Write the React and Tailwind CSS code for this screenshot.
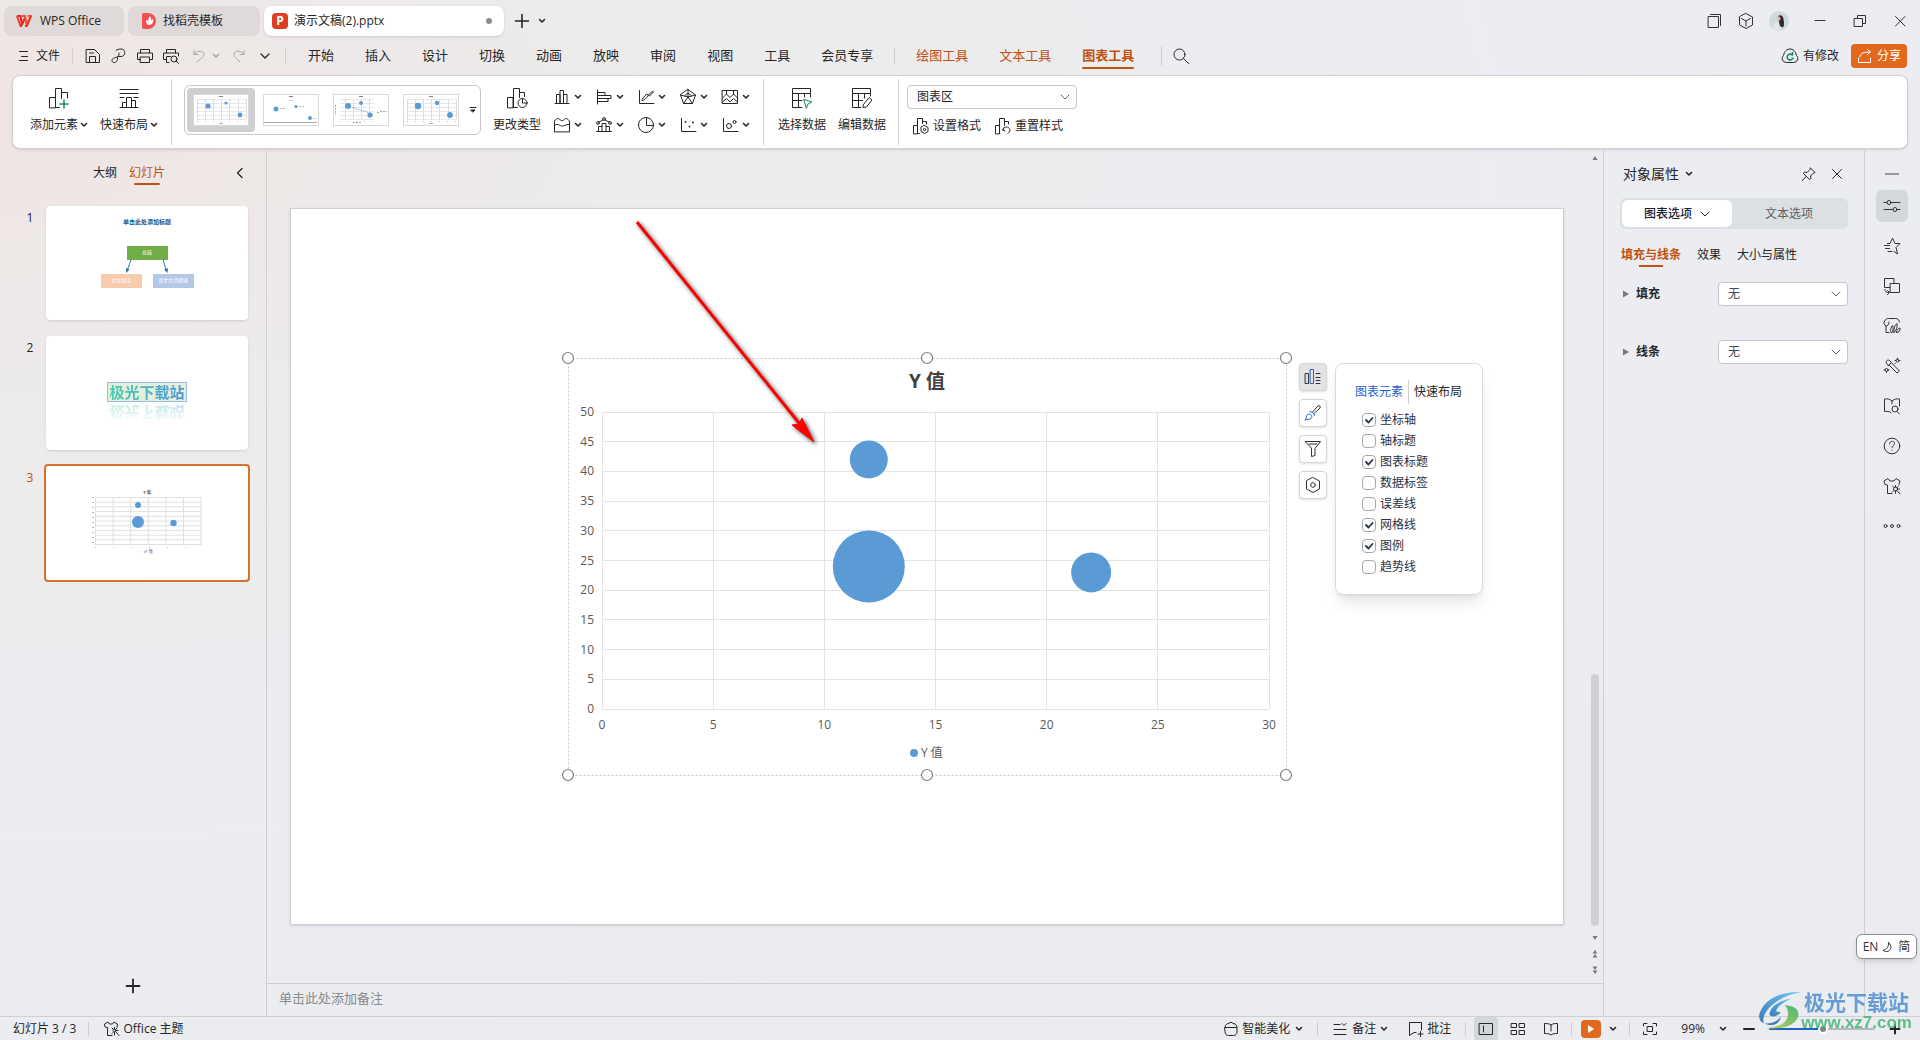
/**
 * FILE: App.jsx
 * PURPOSE: Presentation editor window with the chart tools ribbon open
 */

import React, { useState } from "react";

const MENU_TABS = ["开始", "插入", "设计", "切换", "动画", "放映", "审阅", "视图", "工具", "会员专享"];
const TOOL_TABS = ["绘图工具", "文本工具", "图表工具"];

const CHART_ELEMENTS = [
  { label: "坐标轴", checked: true },
  { label: "轴标题", checked: false },
  { label: "图表标题", checked: true },
  { label: "数据标签", checked: false },
  { label: "误差线", checked: false },
  { label: "网格线", checked: true },
  { label: "图例", checked: true },
  { label: "趋势线", checked: false },
];

const BUBBLES = [
  { x: 12, y: 42, r: 19 },
  { x: 12, y: 24, r: 36 },
  { x: 22, y: 23, r: 20 },
];

/* ---------- icons ---------- */

function Icon({ size = 18, width = 1, className = "", children }) {
  return (
    <svg
      width={size}
      height={size}
      viewBox={`0 0 ${size} ${size}`}
      fill="none"
      stroke="currentColor"
      strokeWidth={width}
      strokeLinejoin="round"
      strokeLinecap="round"
      className={`shrink-0 ${className}`}
      aria-hidden="true"
    >
      {children}
    </svg>
  );
}

function Caret({ className = "" }) {
  return (
    <Icon size={8} width={1.6} className={className}>
      <path d="M1.5 2.5 4 5l2.5-2.5" />
    </Icon>
  );
}

function ThinCaret({ className = "" }) {
  return (
    <Icon size={10} width={1} className={className}>
      <path d="M1 3l4 4 4-4" />
    </Icon>
  );
}

function Divider({ className = "" }) {
  return <span className={`w-px shrink-0 bg-[#cfcfd1] ${className}`} />;
}

const ShirtIcon = ({ size = 18 }) => (
  <Icon size={size}>
    <path d="M9 15.5H4.5V7.500L2 7 1.500 4 5 2l1.500 2h3L11 2l3.500 2-.5 3" />
    <circle cx="11.500" cy="10.500" r="1.500" />
    <path d="M11.500 7.500V9M15 10.500h-2M9 8l1.500 1.500M14 8l-1.500 1.500M10 12.500l-1 1M13 12l3 3.500M11.500 12v3" />
  </Icon>
);

const FILE_ICONS = [
  {
    label: "保存",
    art: <path d="M2.500 2.500h8l5 5v8h-13zM5.500 15.500V9.500h6v6M5.500 6h4" />,
  },
  {
    label: "输出为PDF",
    art: <path d="M6 3.500C7 2.500 9 2 11 2c5 0 5 7.500 0 7.500H8.500c-.8 0-1 .5-1 1.500C8 16 2 17 2 13.500 2 11 5 11 8 9.500c1-.8 1-2 1-3.500" />,
  },
  {
    label: "打印",
    art: (
      <>
        <path d="M4.500 6V2.500h9V6M4.500 12.500h-3V6h15v6.500h-3" />
        <path d="M4.500 10h9v5.500h-9z" />
      </>
    ),
  },
  {
    label: "打印预览",
    art: (
      <>
        <path d="M4.500 6V2.500h9V6M4.500 12.500h-3V6h15v3M7 15.500H4.500V9.500h4" />
        <circle cx="12" cy="12" r="3" />
        <path d="m14 14 2.500 2.500" />
      </>
    ),
  },
];

const CHART_TYPE_ICONS = [
  { label: "柱形图", art: <path d="M2 15.500h14M3.500 15.500V6.500H7v9M7 15.500v-13h3.500v13M10.500 6.500H14v9" /> },
  { label: "条形图", art: <path d="M2.500 2v14M2.500 4.500H10v3H2.500M2.500 7.500H16v3H2.500M2.500 10.500H13v3H2.500" /> },
  {
    label: "折线图",
    art: <path d="M2.500 2.500v13H17M5 11.500l4.500-5.500 3 2L16.500 4M5 12.500c5 .5 6.500-9 11-9" />,
  },
  {
    label: "雷达图",
    art: <path d="M9 1.500l7.500 5.500-3 8.500h-9L1.500 7zM9 1.500V9l7.500-2M9 9 1.500 7M9 9l4.500 6.500M9 9l-4.500 6.500M5.500 8 9 5l3.500 3" />,
  },
  {
    label: "股价图",
    art: <path d="M1.500 2.500h15v13h-15zM1.500 10 5.500 6 9 9.500 12.500 6l4 4M5.500 2.500V6M12.500 2.500V6M1.500 14l4-3.500L9 14l3.500-3.500 4 3.500" />,
  },
  {
    label: "面积图",
    art: <path d="M1.500 15.500V5c2-3 4-3 6-1s4-1 5-1.500 4 1.500 4 3.500v9.500zM1.500 9.500c4-3 5 1 8 .5s4-2 7-1.500" />,
  },
  {
    label: "组合图",
    art: (
      <>
        <path d="M1.500 15.500h15M3.500 15.500v-5h3.500M7 15.500V7.500h4v8M11 10.500h3.500v5M4 6l4-2M10 4l4 2" />
        <circle cx="3" cy="7" r="1.400" />
        <circle cx="9" cy="3" r="1.400" />
        <circle cx="15" cy="7" r="1.400" />
      </>
    ),
  },
  {
    label: "饼图",
    art: (
      <>
        <circle cx="9" cy="9" r="7.500" />
        <path d="M9.500 1.500v8h7" />
      </>
    ),
  },
  {
    label: "散点图",
    art: (
      <>
        <path d="M2.500 2.500v13H17" />
        <path strokeWidth="1.8" d="M6.500 6v.1M10.500 10.500v.1M14 6.500v.1" />
      </>
    ),
  },
  {
    label: "气泡图",
    art: (
      <>
        <path d="M2.500 2.500v13H17" />
        <circle cx="8" cy="10" r="2.500" />
        <circle cx="13.500" cy="6" r="1.500" />
      </>
    ),
  },
];

const RAIL_ICONS = [
  {
    label: "属性",
    active: true,
    art: (
      <>
        <path d="M1 5.500h3M8 5.500h9M1 12.500h9M14 12.500h3" />
        <circle cx="6" cy="5.500" r="2" />
        <circle cx="12" cy="12.500" r="2" />
      </>
    ),
  },
  {
    label: "动画",
    art: <path d="M4.500 6.500h2.500l2.500-5.500 2.500 5.500h5l-4 4 1.500 6.500-3.500-2.500M1.500 8.500h5M2.500 11.500h4M5 14.500h4" />,
  },
  {
    label: "切换",
    art: <path d="M7 10.500H1.500v-9H11V6M7.500 6.500h9v9h-9zM2 12.500c0 2 1 3 4 3M4.500 13.500l2 2-2 2" />,
  },
  {
    label: "素材",
    art: <path d="M6 15.500H3V9C1 8 .5 6 1.500 4c1-2 3-2.500 4-2.500h7c2 0 3.500 1 4 3.500M3 9c2 0 3-1.500 3-4M8 15.500c-1-3 0-5 1.500-7 1 3 1 5-.5 7zM11 15.500c-.5-4 .5-7 3-9 .5 4-.5 7-3 9zM13.500 15.500c.5-3 1.500-4 3.500-4.500.5 3-1 4.500-3.500 4.500" />,
  },
  {
    label: "设计工具",
    art: (
      <>
        <path d="m6 8 8 8 2.500-2L8.500 6M3.500 6.500c-1.500-2 1-4.500 3-3l2 2-3 3z" />
        <circle cx="14.500" cy="3.500" r="1.500" />
        <circle cx="3.500" cy="13" r="1.500" />
        <path d="M14.500 1v1M17 3.500h-1M12 3.500h1M1 13h1M3.500 15.500v-1M6 13H5M12.500 6l-1 1" />
      </>
    ),
  },
  {
    label: "查找",
    art: (
      <>
        <path d="M8 15.500c-2-1.500-4-1-6.500-1V2c3-.5 5 0 7.500 2 2.500-2 5-2.500 7.500-2v7M9 4v3" />
        <circle cx="12" cy="12" r="3" />
        <path d="m14 14.500 2.500 2.500" />
      </>
    ),
  },
  {
    label: "帮助",
    art: (
      <>
        <circle cx="9" cy="9" r="7.800" />
        <path d="M6.500 7c0-3.500 5-3.500 5-.5 0 2-2.500 2-2.500 4M9 13v.2" />
      </>
    ),
  },
  {
    label: "模板",
    art: (
      <>
        <path d="M9 16.500H4.500V8L2 7.500 1 4l4-2.500 2 2.500h4l2-2.500L17 4l-1 3.500" />
        <circle cx="12.500" cy="12" r="2" />
        <path d="M12.500 8.500V10M16.500 12h-2M9.500 9l1.500 1.500M15.500 9 14 10.500M9.500 15l1.500-1.500M14 13.500l3 3.500M12.500 14v2.500" />
      </>
    ),
  },
  {
    label: "更多",
    art: (
      <>
        <circle cx="2.500" cy="9" r="1.500" />
        <circle cx="9" cy="9" r="1.500" />
        <circle cx="15.500" cy="9" r="1.500" />
      </>
    ),
  },
];

/* ---------- top area ---------- */

function TitleBar() {
  return (
    <header className="flex h-[42px] items-center pl-1 pr-3 text-xs text-[#262626]">
      <div className="flex items-center gap-1">
        <button className="flex h-[30px] w-[120px] items-center gap-2 rounded-lg bg-[#dfdad9] pl-3">
          <svg width="16" height="12" viewBox="0 0 16 12" fill="none" strokeWidth="2" aria-hidden="true">
            <path d="M1 1h3.500L6 9.500 9.500 2" stroke="#e4251b" />
            <path d="M6 1h3l1.500 8.500L15 1h-3.500" stroke="#f4502f" />
            <path d="M1 1l3.500 10H6M15 1l-4 10H9" stroke="#f03a28" />
          </svg>
          <span>WPS Office</span>
        </button>
        <button className="flex h-[30px] w-[132px] items-center gap-[7px] rounded-lg bg-[#dfdad9] pl-3.5">
          <svg width="14" height="16" viewBox="0 0 14 16" aria-hidden="true">
            <path d="M0 2a2 2 0 0 1 2-2h4a8 8 0 0 1 0 16H2a2 2 0 0 1-2-2z" fill="#f0504f" />
            <path d="M4 7c2 0 3 2 3 5-2 0-3-2-3-5zM8 3c2 3 1 6-1 8-1-3-1-5 1-8zM11 6c1 3-1 6-4 6 0-3 2-5 4-6z" fill="#fff" />
          </svg>
          <span>找稻壳模板</span>
        </button>
        <button className="flex h-[30px] w-[240px] items-center gap-[6px] rounded-lg bg-white pl-2 pr-3 shadow-sm">
          <span className="flex h-4 w-4 items-center justify-center rounded-sm bg-[#e03c22] text-xs font-bold text-white">P</span>
          <span className="flex-1 text-left">演示文稿(2).pptx</span>
          <span className="h-1.5 w-1.5 rounded-full bg-[#8d8d8d]" />
        </button>
      </div>
      <button className="ml-2.5" aria-label="新建">
        <Icon size={16} width={1.6}>
          <path d="M8 1.500v13M1.500 8h13" />
        </Icon>
      </button>
      <button className="ml-2" aria-label="标签列表">
        <Caret />
      </button>

      <div className="ml-auto flex items-center text-[#333]">
        <button aria-label="窗口">
          <Icon size={16}>
            <path d="M1.500 3.500h10v11h-10zM3.500 1.500h10v11" />
          </Icon>
        </button>
        <button className="ml-3.5" aria-label="应用">
          <Icon size={18}>
            <path d="M9 1.500l6.500 3.500v8L9 16.500 2.500 13V5zM4.500 6.500 9 9l4.500-2.500M9 9v5" />
          </Icon>
        </button>
        <button className="ml-3.5" aria-label="账户">
          <svg width="20" height="20" viewBox="0 0 20 20" aria-hidden="true">
            <circle cx="10" cy="10" r="10" fill="#cfd9de" />
            <path d="M9 5c3-2 5 0 5.500 3 .5 4 1 6-.5 8.500l-3-1.500-1-4z" fill="#2e2730" />
            <path d="M8.500 6c1-1 3-.5 3 1.500s-2 3-3 2.500z" fill="#dfb9a8" />
            <path d="M4 18c0-4 2-7 5.500-7L11 19.500H6z" fill="#dfe9ea" />
          </svg>
        </button>
        <button className="ml-6" aria-label="最小化">
          <Icon size={14}>
            <path d="M2 6.500h10" />
          </Icon>
        </button>
        <button className="ml-[25px]" aria-label="还原">
          <Icon size={16}>
            <path d="M2.500 5.500h8v8h-8zM5.500 5.500v-3h8v8h-3" />
          </Icon>
        </button>
        <button className="ml-6" aria-label="关闭">
          <Icon size={16}>
            <path d="m3.500 3.500 9.500 9.500M13 3.500 3.500 13" />
          </Icon>
        </button>
      </div>
    </header>
  );
}

function MenuBar({ active, onSelect }) {
  return (
    <nav className="flex h-[27px] items-center pl-[18px] pr-[13px] text-[#262626]">
      <button className="flex items-center gap-1.5 text-xs">
        <Icon size={12} width={1}>
          <path d="M1.500 1.500h8M3.500 6.500h6M1.500 10.500h8" />
        </Icon>
        文件
      </button>
      <Divider className="ml-3 h-4" />
      <div className="ml-[11px] flex gap-2">
        {FILE_ICONS.map((item) => (
          <button key={item.label} aria-label={item.label}>
            <Icon>{item.art}</Icon>
          </button>
        ))}
      </div>
      <button className="ml-3 flex items-center gap-1 text-[#aaa6a6]" aria-label="撤销">
        <Icon size={16}>
          <path d="M2 2.500v4h4M2 6.500c3-5 10-4 10 0 0 3-4 4-7 7.500" />
        </Icon>
        <Caret />
      </button>
      <button className="ml-[11px] text-[#aaa6a6]" aria-label="重做">
        <Icon size={16}>
          <path d="M13 2.500v4H9M13 6.500c-3-5-10-4-10 0 0 3 3 4 6 7.500" />
        </Icon>
      </button>
      <button className="ml-3" aria-label="更多命令">
        <Icon size={12} width={1.3}>
          <path d="m2 4 4 4 4-4" />
        </Icon>
      </button>
      <Divider className="ml-3.5 h-4" />

      <div className="ml-[22px] flex gap-[31px] text-[13px]">
        {MENU_TABS.map((tab) => (
          <button key={tab} onClick={() => onSelect(tab)}>
            {tab}
          </button>
        ))}
      </div>
      <Divider className="ml-[21px] h-4" />
      <div className="ml-[21px] flex gap-[31px] text-[13px] text-[#c2500f]">
        {TOOL_TABS.map((tab) => (
          <button
            key={tab}
            onClick={() => onSelect(tab)}
            className={`relative ${active === tab ? "font-bold after:absolute after:inset-x-0 after:-bottom-1 after:h-0.5 after:rounded after:bg-[#c2500f]" : ""}`}
          >
            {tab}
          </button>
        ))}
      </div>
      <Divider className="ml-[27px] h-5" />
      <button className="ml-2.5" aria-label="搜索">
        <Icon>
          <circle cx="7.500" cy="7.500" r="5.500" />
          <path d="m11.500 11.500 5 5" />
        </Icon>
      </button>

      <button className="ml-auto flex items-center gap-1 text-xs">
        <Icon size={18}>
          <path d="M5 15.500a4 4 0 0 1-2.500-7C3.500 4 6 2 9 2s5.500 2 6.500 6.500a4 4 0 0 1-2.500 7z" />
          <path stroke="#138a62" strokeWidth="1.500" d="M11.500 8A3 3 0 1 0 12 11M9 7.500h2.500V5.500" />
        </Icon>
        有修改
      </button>
      <button className="ml-3 flex h-6 w-14 items-center justify-center gap-1 rounded bg-[#e2691c] text-xs text-white">
        <Icon size={16}>
          <path d="M1.500 10v4.500h12V10M3 9c0-4 4-5 10-5M10.500 1.500 13.500 4l-3 2.500" />
        </Icon>
        分享
      </button>
    </nav>
  );
}

function RibbonButton({ label, caret, wide, children }) {
  return (
    <button className={`flex shrink-0 flex-col items-center gap-2 pt-[11px] ${wide ? "w-[70px]" : "w-[60px]"}`}>
      <Icon size={22}>{children}</Icon>
      <span className="flex items-center gap-0.5 leading-4">
        {label}
        {caret && <Caret />}
      </span>
    </button>
  );
}

function StyleThumb({ variant, selected }) {
  const grid = variant !== 1;
  const left = variant === 2 ? 7 : 4;
  const right = variant === 2 ? 41 : 53;
  const dots = {
    0: [[15, 12, 2.6], [33, 9, 1.6], [47, 21, 2.4]],
    1: [[13, 15, 2.5], [33, 12.5, 1.6], [47, 24, 2]],
    2: [[15, 12, 3], [28, 9, 2], [37, 21, 2.6]],
    3: [[15, 12, 3.2], [34, 9, 2.2], [47, 21, 2.9]],
  }[variant];

  return (
    <button
      aria-label={`图表样式 ${variant + 1}`}
      className={`flex h-11 w-[68px] items-center justify-center rounded ${selected ? "bg-[#cfcfcf]" : ""}`}
    >
      <svg width="56" height="32" viewBox="0 0 56 32" aria-hidden="true">
        <rect x="0.5" y="0.5" width="55" height="31" fill="#fff" stroke="#d9d9d9" />
        <path d="M26 2.500h4" stroke="#8a8078" />
        {grid &&
          [5, 9, 13, 17, 21, 25].map((y) => <path key={y} d={`M${left} ${y}.5H${right}`} stroke="#e8e8e8" />)}
        {grid &&
          [4, 12, 20, 28, 36, 45, 53]
            .filter((x) => x >= left && x <= right)
            .map((x) => <path key={x} d={`M${x}.5 5v20`} stroke="#dcdcdc" />)}
        {grid && <path d={`M${left} 27.500H${right}`} stroke="#c9b3b3" strokeDasharray="1 7" />}
        {variant === 1 && (
          <>
            <path d="M1 28.500h53" stroke="#aaa" />
            <path d="M26 6.500h4M17 14.500h6M36 12.500h6M50 24.500h4" stroke="#b5bdd6" strokeDasharray="2 1" />
          </>
        )}
        {variant === 2 && (
          <>
            <path d="m15 12 22 7" stroke="#5b9bd5" strokeDasharray="1 1" />
            <path d="M44 18.500h2M47 17.500h7" stroke="#a5a3b4" strokeDasharray="2 1" />
            <path d="M20 28.500h9M2.500 11v10" stroke="#b8a89c" strokeDasharray="2 1" />
          </>
        )}
        {(variant === 0 || variant === 3) && <path d="M26 29.500h4" stroke="#a9b3c6" />}
        {dots.map(([x, y, r]) => (
          <circle key={x} cx={x} cy={y} r={r} fill="#5b9bd5" />
        ))}
      </svg>
    </button>
  );
}

function Ribbon() {
  return (
    <section className="mx-3 mt-1.5 flex h-[74px] items-start rounded-lg border border-[#d3d1d1] bg-white pl-[11px] text-xs text-[#262626] shadow-sm">
      <RibbonButton label="添加元素" caret wide>
        <path d="M1.500 20.500V10.500h6v10zM7.500 10.500v-9h6v10M13.500 5.500h6V11M7.500 20.500h4" />
        <path stroke="#138a62" strokeWidth="1.500" d="M16 13v8M12 17h8" />
      </RibbonButton>
      <RibbonButton label="快速布局" caret wide>
        <path d="M2 2.500h18M2 6.500h18M2 10.500h4M16 10.500h4M2 20.500h18M4.500 20.500v-5h4M8.500 20.500v-10h5v10M13.500 13.500h4v7" />
      </RibbonButton>
      <Divider className="ml-[7px] mt-[3px] h-[66px]" />

      <div className="ml-3 mt-[9px] flex h-[50px] w-[297px] items-center gap-0.5 rounded-md border border-[#c6c6c6] pl-0.5">
        {[0, 1, 2, 3].map((v) => (
          <StyleThumb key={v} variant={v} selected={v === 0} />
        ))}
        <button className="ml-0.5" aria-label="更多样式">
          <Icon size={8} width={1}>
            <path d="M1 1.500h6" />
            <path d="M2 4h4L4 6z" fill="currentColor" />
          </Icon>
        </button>
      </div>

      <div className="ml-1.5">
        <RibbonButton label="更改类型">
          <path d="M1.500 20.500V10.500h5.500v10zM7.500 20.500v-19h6v9M13.500 5.500h5v4M7.500 20.500h4" />
          <circle cx="16.500" cy="16" r="4.500" />
          <path d="M16.500 11.500V16H21" />
        </RibbonButton>
      </div>

      <div className="ml-1.5 mt-[7px] grid grid-cols-[repeat(5,42px)] grid-rows-[28px_28px]">
        {CHART_TYPE_ICONS.map((item) => (
          <button key={item.label} aria-label={item.label} className="flex items-center gap-[3px]">
            <Icon>{item.art}</Icon>
            <Caret />
          </button>
        ))}
      </div>
      <Divider className="mt-[3px] h-[66px]" />

      <div className="ml-2 flex">
        <RibbonButton label="选择数据">
          <path d="M11 20.500H1.500v-19h18V10M1.500 6.500h18M1.500 13.500H11M7.500 6.500v14M13.500 6.500V10" />
          <path stroke="#138a62" d="m13 12.500 8 2.500-4 2-1.500 4z" />
        </RibbonButton>
        <RibbonButton label="编辑数据">
          <path d="M10 20.500H1.500v-19h18V9M1.500 6.500h18M1.500 13.500h10M7.500 6.500v14M13.500 6.500V11" />
          <path d="m12.500 17.500 5.500-7 3 2.500-5.500 7-3 .5z" />
        </RibbonButton>
      </div>
      <Divider className="ml-1.5 mt-[3px] h-[66px]" />

      <div className="ml-2 mt-[9px] flex flex-col gap-2">
        <Dropdown label="图表区域" options={["图表区", "绘图区"]} className="w-[170px]" />
        <div className="flex gap-[13px] pl-[5px] leading-4">
          <button className="flex items-center gap-[3px]">
            <Icon>
              <path d="M1.500 16.500v-8h4v8zM5.500 8.500v-7h5v5M10.500 4.500h4V7M5.500 16.500h2" />
              <path d="M12.500 8.500l3.500 2v4l-3.500 2-3.500-2v-4z" />
              <circle cx="12.500" cy="12.500" r="1.200" />
            </Icon>
            设置格式
          </button>
          <button className="flex items-center gap-[3px]">
            <Icon>
              <path d="M1.500 16.500v-8h4v8zM5.500 16.500v-15h5v7M10.500 4.500h4V7" />
              <path d="M10 10.500 8.500 13l2.500 1M9 13c1-5 7-3 7 0 0 1.500-1 2.500-2 3.500" />
            </Icon>
            重置样式
          </button>
        </div>
      </div>
    </section>
  );
}

function Dropdown({ label, options, className = "", selectClass = "" }) {
  return (
    <div className={`relative flex h-6 items-center ${className}`}>
      <select
        aria-label={label}
        className={`h-6 w-full appearance-none rounded border border-[#c4c6c8] bg-white pl-[9px] pr-6 text-xs outline-none ${selectClass}`}
      >
        {options.map((option) => (
          <option key={option}>{option}</option>
        ))}
      </select>
      <ThinCaret className="pointer-events-none absolute right-[7px] text-[#666]" />
    </div>
  );
}

/* ---------- slide list ---------- */

function TreeSlide() {
  return (
    <div className="flex h-full flex-col items-center pt-2.5 text-[5px] leading-3 text-white">
      <p className="text-[6px] font-bold text-[#20598c]">单击此处添加标题</p>
      <p className="mt-[18px] h-3.5 w-[41px] bg-[#70ad47] text-center">总结</p>
      <svg width="42" height="14" viewBox="0 0 42 14" stroke="#2e75a8" fill="#2e75a8" aria-hidden="true">
        <path d="M5 0 1 11M37 0l3.500 11" fill="none" />
        <path stroke="none" d="m0 13 0-5 3.500 1.500zM41.500 13l.5-5-4 1.500z" />
      </svg>
      <div className="flex gap-[11px] text-center">
        <p className="h-3.5 w-[41px] bg-[#f8cbad]">语文阅读</p>
        <p className="h-3.5 w-[41px] bg-[#b4c7e7]">语文古诗朗诵</p>
      </div>
    </div>
  );
}

function WordArtSlide() {
  return (
    <div className="flex h-full flex-col items-center pt-[46px] text-[15px] font-bold leading-[18px]">
      <p className="h-5 w-20 border border-[#9dbde6] bg-[#e2efda] text-center">
        <span className="bg-gradient-to-r from-[#48d0ae] to-[#4f8fd6] bg-clip-text text-transparent">极光下载站</span>
      </p>
      <p
        aria-hidden="true"
        className="h-5 w-20 -scale-y-100 bg-[#f3faf0] text-center opacity-40 [mask-image:linear-gradient(to_top,black,transparent)]"
      >
        <span className="bg-gradient-to-r from-[#48d0ae] to-[#4f8fd6] bg-clip-text text-transparent">极光下载站</span>
      </p>
    </div>
  );
}

function ChartSlide() {
  return (
    <svg className="h-full w-full" viewBox="0 0 202 114" aria-hidden="true">
      <g stroke="#e0e0e0">
        {[0, 1, 2, 3, 4, 5, 6, 7, 8, 9, 10].map((i) => (
          <path key={i} d={`M49 ${31.5 + i * 4.7}H155`} />
        ))}
        {[0, 1, 2, 3, 4, 5, 6].map((i) => (
          <path key={i} d={`M${49.5 + i * 17.6} 31V79`} />
        ))}
      </g>
      <g fill="#5b9bd5">
        <circle cx="92" cy="39" r="3" />
        <circle cx="92" cy="56" r="6" />
        <circle cx="127.500" cy="57" r="3.200" />
        <circle cx="98.500" cy="86" r="0.8" />
      </g>
      <g fill="#555" fontSize="4" textAnchor="middle">
        <text x="101" y="28" fontWeight="700">Y 值</text>
        <text x="103" y="87">Y 值</text>
      </g>
      <path d="M47 31v49" stroke="#bbb" strokeWidth="2" strokeDasharray="1 4" />
      <path d="M49 81.500h107" stroke="#bbb" strokeDasharray="1 17" />
    </svg>
  );
}

function SlidePanel({ current, onSelect }) {
  const slides = [<TreeSlide />, <WordArtSlide />, <ChartSlide />];

  return (
    <aside className="flex w-[267px] shrink-0 flex-col border-r border-[#cfcfd1] text-xs text-[#262626]">
      <div className="flex h-[46px] items-center pl-[93px] pr-5">
        <button>大纲</button>
        <button className="relative ml-3 text-[#c2500f] after:absolute after:inset-x-[5px] after:-bottom-1 after:h-0.5 after:rounded after:bg-[#c2500f]">
          幻灯片
        </button>
        <button className="ml-auto" aria-label="收起">
          <Icon size={12} width={1.3}>
            <path d="M8 1.500 3.500 6 8 10.500" />
          </Icon>
        </button>
      </div>
      <ol className="flex flex-1 flex-col gap-3 pl-6 pr-4 pt-2">
        {slides.map((slide, i) => (
          <li key={i} className="flex gap-2">
            <span className={`w-3 pt-1.5 text-center ${current === i ? "text-[#c2500f]" : ""}`}>{i + 1}</span>
            <button
              onClick={() => onSelect(i)}
              aria-label={`幻灯片 ${i + 1}`}
              className={`h-[118px] flex-1 rounded border-2 ${current === i ? "border-[#d9702f]" : "border-transparent"}`}
            >
              <div className={`h-full rounded-sm bg-white ${current === i ? "" : "shadow"}`}>{slide}</div>
            </button>
          </li>
        ))}
      </ol>
      <button className="mb-[22px] flex justify-center" aria-label="新建幻灯片">
        <Icon size={16} width={1.8}>
          <path d="M8 1.500v13M1.500 8h13" />
        </Icon>
      </button>
    </aside>
  );
}

/* ---------- canvas ---------- */

// The plot spans x 0-30 and y 0-50 inside a 667x297 px box
function BubbleChart() {
  const px = (x) => 43 + (x / 30) * 667;
  const py = (y) => 360 - (y / 50) * 297;
  const handles = [9, 368, 727];

  return (
    <svg width="736" height="436" viewBox="0 0 736 436" role="img" aria-label="Y 值">
      <rect x="9.500" y="9.500" width="718" height="417" fill="none" stroke="#c8c8c8" strokeDasharray="2 2" />
      <g stroke="#e3e3e3" shapeRendering="crispEdges">
        {[0, 5, 10, 15, 20, 25, 30, 35, 40, 45, 50].map((y) => (
          <path key={y} d={`M43 ${py(y)}H710`} />
        ))}
        {[0, 5, 10, 15, 20, 25, 30].map((x) => (
          <path key={x} d={`M${px(x)} 63V360`} />
        ))}
      </g>
      <g fill="#595959" fontSize="12">
        {[0, 5, 10, 15, 20, 25, 30, 35, 40, 45, 50].map((y) => (
          <text key={y} x="35" y={py(y) + 4} textAnchor="end">
            {y}
          </text>
        ))}
        {[0, 5, 10, 15, 20, 25, 30].map((x) => (
          <text key={x} x={px(x)} y="380" textAnchor="middle">
            {x}
          </text>
        ))}
        <text x="362" y="408">Y 值</text>
      </g>
      <text x="368" y="39" textAnchor="middle" fontSize="19" fontWeight="700" fill="#404040">
        Y 值
      </text>
      <g fill="#5b9bd5">
        {BUBBLES.map((b) => (
          <circle key={`${b.x}-${b.y}`} cx={px(b.x)} cy={py(b.y)} r={b.r} />
        ))}
        <circle cx="355" cy="404" r="4" />
      </g>
      <g fill="#fff" stroke="#7f7f7f" strokeWidth="1.200">
        {handles.map((x) => (
          <circle key={`t${x}`} cx={x} cy="9" r="5.500" />
        ))}
        {handles.map((x) => (
          <circle key={`b${x}`} cx={x} cy="426" r="5.500" />
        ))}
      </g>
    </svg>
  );
}

function RedArrow() {
  return (
    <svg
      width="200"
      height="240"
      viewBox="0 0 200 240"
      aria-hidden="true"
      className="pointer-events-none absolute -top-[135px] left-[69px] drop-shadow-[2px_2px_2px_rgba(0,0,0,0.7)]"
    >
      <path d="m9 8 166 206" stroke="#f00" strokeWidth="3" />
      <path d="m186 228-22-17 7-1 3-6z" fill="#f00" stroke="#f00" />
    </svg>
  );
}

const SIDE_TOOLS = [
  {
    label: "图表元素",
    art: (
      <>
        <path d="M1.500 5.500h3v10h-3zM12 5.500h4M12 9.500h4M12 12.500h4M12 15.500h4" />
        <path stroke="#2563d9" d="M6.500 1.500h3v14h-3z" />
      </>
    ),
  },
  {
    label: "图表样式",
    art: (
      <>
        <path d="m8.500 8 5.500-6c1.500-1 3 .5 2 2l-6 5.500" />
        <path stroke="#2563d9" d="M6 7.500c2 0 4.500 2 4.500 4M1.500 16c1-2 .5-4 2-5.500C6 8.500 9.500 12 7 14.500c-1.500 1-3.500.5-5.500 1.500z" />
      </>
    ),
  },
  { label: "图表筛选器", art: <path d="M1.500 1.500h15l-5.500 7v7l-3.500 1v-8zM5 4h8" /> },
  {
    label: "设置图表区域格式",
    art: (
      <>
        <path d="m9 1.500 6.500 3.500v8L9 16.500 2.500 13V5z" />
        <circle cx="9" cy="9" r="2.300" />
      </>
    ),
  },
];

function ElementPanel() {
  const [items, setItems] = useState(CHART_ELEMENTS);

  const toggle = (label) => {
    setItems(items.map((item) => (item.label === label ? { ...item, checked: !item.checked } : item)));
  };

  return (
    <div className="h-[232px] w-[148px] shrink-0 rounded-lg border border-[#d9d9dc] bg-white pt-4 text-xs text-[#2a3145] shadow-lg">
      <div className="flex h-6 items-center pl-[19px]">
        <button className="text-[#1f5fd0]">图表元素</button>
        <Divider className="mx-[5px] h-6" />
        <button className="text-[#262626]">快速布局</button>
      </div>
      <ul className="pl-[26px] pt-1.5">
        {items.map((item) => (
          <li key={item.label}>
            <label className="flex h-[21px] items-center gap-1">
              <span className="relative flex">
                <input
                  type="checkbox"
                  checked={item.checked}
                  onChange={() => toggle(item.label)}
                  className="h-3.5 w-3.5 appearance-none rounded-sm border border-[#a3a7af] bg-white"
                />
                {item.checked && (
                  <Icon size={14} width={1.8} className="pointer-events-none absolute inset-0">
                    <path d="m4 7 2.500 2.500L10.500 5" />
                  </Icon>
                )}
              </span>
              {item.label}
            </label>
          </li>
        ))}
      </ul>
    </div>
  );
}

function Canvas() {
  return (
    <main className="flex min-w-0 flex-1 flex-col">
      <div className="flex min-h-0 flex-1">
        <div className="flex min-w-0 flex-1 pb-[58px] pl-[23px] pr-[25px] pt-[58px]">
          <div className="flex flex-1 items-center justify-center border border-[#d0d0d2] bg-white shadow-sm">
            <div className="relative">
              <BubbleChart />
              <RedArrow />
              <div className="absolute left-full top-3.5 flex gap-2 pl-1">
                <div className="flex flex-col gap-2 text-[#333]">
                  {SIDE_TOOLS.map((tool, i) => (
                    <button
                      key={tool.label}
                      aria-label={tool.label}
                      className={`flex h-7 w-7 items-center justify-center rounded border border-[#d6d6d6] shadow ${
                        i === 0 ? "bg-[#e3e3e3]" : "bg-white"
                      }`}
                    >
                      <Icon>{tool.art}</Icon>
                    </button>
                  ))}
                </div>
                <ElementPanel />
              </div>
            </div>
          </div>
        </div>
        <div className="flex w-3 flex-col items-center pb-[9px] pt-1 text-[#76777a]">
          <ScrollMark d="M4 2 6.500 6h-5z" />
          <span className="mt-auto h-[252px] w-2 rounded-full bg-[#cfd0d4]" />
          <span className="mt-2 flex flex-col gap-2">
            <ScrollMark d="M4 6 1.500 2h5z" />
            <ScrollMark d="M4 0 6.500 3.500h-5zM4 4l2.500 3.500h-5z" />
            <ScrollMark d="M4 4 1.500.5h5zM4 8 1.500 4.500h5z" />
          </span>
        </div>
        <div className="w-0.5" />
      </div>
      <textarea
        aria-label="备注"
        placeholder="单击此处添加备注"
        className="h-[33px] w-full resize-none border-t border-[#cfcfd1] bg-transparent pl-3 pt-1 text-[13px] leading-5 outline-none placeholder:text-[#8a8a8a]"
      />
    </main>
  );
}

function ScrollMark({ d }) {
  return (
    <svg width="8" height="8" viewBox="0 0 8 8" fill="currentColor" aria-hidden="true">
      <path d={d} />
    </svg>
  );
}

/* ---------- properties ---------- */

function PropertyRow({ label }) {
  return (
    <div className="flex h-6 items-center">
      <button className="flex items-center gap-1.5 pl-0.5 font-bold">
        <svg width="8" height="8" viewBox="0 0 8 8" fill="#77797c" aria-hidden="true">
          <path d="M1 .5 7 4 1 7.500z" />
        </svg>
        {label}
      </button>
      <Dropdown label={label} options={["无", "自动"]} className="ml-auto w-[130px]" selectClass="text-[#3f4a60]" />
    </div>
  );
}

function PropertiesPanel() {
  return (
    <aside className="w-[262px] shrink-0 border-x border-[#cfd0d3] px-4 text-xs text-[#262626]">
      <div className="flex h-12 items-center">
        <button className="flex items-center gap-1.5 pl-[3px] text-sm">
          对象属性
          <Caret />
        </button>
        <button className="ml-auto" aria-label="固定">
          <Icon size={14}>
            <path d="m8.500 1 4.500 4.500-1.500.5-3 3 .5 2.500-1.500 1-6-6 1-1.500L5 5.500l3-3zM4 9.500.500 13.500" />
          </Icon>
        </button>
        <button className="ml-3.5 mr-1" aria-label="关闭">
          <Icon size={14}>
            <path d="m2.500 2.500 9 9M11.500 2.500l-9 9" />
          </Icon>
        </button>
      </div>
      <div className="flex h-[31px] rounded-md bg-[#dde0e3] p-0.5">
        <button className="flex w-[110px] items-center justify-center gap-2 rounded-md bg-white font-medium text-[#1d2233]">
          图表选项
          <ThinCaret />
        </button>
        <button className="flex-1 text-[#5c5f63]">文本选项</button>
      </div>
      <div className="mt-4 flex h-5 items-center gap-4 pl-px">
        <button className="relative font-bold text-[#c2500f] after:absolute after:-bottom-1 after:left-[18px] after:h-0.5 after:w-6 after:bg-[#c2500f]">
          填充与线条
        </button>
        <button>效果</button>
        <button>大小与属性</button>
      </div>
      <div className="mt-[17px] flex flex-col gap-[34px]">
        <PropertyRow label="填充" />
        <PropertyRow label="线条" />
      </div>
    </aside>
  );
}

function IconRail() {
  return (
    <nav className="flex w-[55px] shrink-0 flex-col items-center gap-2 pr-0.5 pt-4 text-[#333]">
      <button className="flex h-4 items-center" aria-label="收起">
        <span className="h-0.5 w-3.5 bg-[#98989a]" />
      </button>
      {RAIL_ICONS.map((item) => (
        <button
          key={item.label}
          aria-label={item.label}
          className={`flex h-8 w-8 items-center justify-center rounded-md ${item.active ? "bg-[#d5d8db]" : ""}`}
        >
          <Icon>{item.art}</Icon>
        </button>
      ))}
    </nav>
  );
}

/* ---------- status bar ---------- */

function StatusBar() {
  const [zoom, setZoom] = useState(51);

  return (
    <footer className="flex h-6 shrink-0 items-center border-t border-[#cfcfd1] pl-[13px] pr-[17px] text-xs text-[#262626]">
      <span>幻灯片 3 / 3</span>
      <Divider className="ml-3 h-3.5" />
      <button className="ml-3.5 flex items-center gap-0.5">
        <ShirtIcon />
        Office 主题
      </button>

      <button className="ml-auto flex items-center gap-[3px]">
        <Icon size={16}>
          <path d="M2 6.500h12V11c0 2-1.500 3.500-3.500 3.500h-5C3.500 14.500 2 13 2 11zM2 6.500c0-3 2-4 4-4 1-1.500 3-1.500 4 0 3 0 4 2 4 4" />
        </Icon>
        智能美化
        <Caret className="ml-0.5" />
      </button>
      <Divider className="ml-3.5 h-3.5" />
      <button className="ml-3.5 flex items-center gap-1">
        <Icon size={16}>
          <path d="M2 3.500h6M2 8.500h12M2 13.500h12M10 2.500l2 2 2-2" />
        </Icon>
        备注
        <Caret />
      </button>
      <button className="ml-5 flex items-center gap-[3px]">
        <Icon size={16}>
          <path d="M8 11.500H6l-4.500 3v-13h12V9M12.500 10.500v5M10 13h5" />
        </Icon>
        批注
      </button>
      <Divider className="ml-3.5 h-3.5" />
      <button className="ml-2 flex h-6 w-6 items-center justify-center rounded bg-[#d3d6da]" aria-label="普通视图">
        <Icon size={16}>
          <path d="M1.500 2.500h13v11h-13zM5.500 5v6" />
        </Icon>
      </button>
      <button className="ml-3" aria-label="幻灯片浏览">
        <Icon size={16}>
          <path d="M1.500 2.500h5v4h-5zM9.500 2.500h5v4h-5zM1.500 9.500h5v4h-5zM9.500 9.500h5v4h-5z" />
        </Icon>
      </button>
      <button className="ml-[17px]" aria-label="阅读视图">
        <Icon size={16}>
          <path d="M8 4C6 2.500 4 2.500 1.500 2.500v10c2.500 0 4.500 0 6.500 1.500 2-1.500 4-1.500 6.500-1.500v-10C12 2.500 10 2.500 8 4v6" />
        </Icon>
      </button>
      <Divider className="ml-3 h-3.5" />
      <button className="ml-[9px] flex h-[18px] w-5 items-center justify-center rounded-sm bg-[#e2691c]" aria-label="放映">
        <svg width="8" height="8" viewBox="0 0 8 8" fill="#fff" aria-hidden="true">
          <path d="M1 0l6 4-6 4z" />
        </svg>
      </button>
      <button className="ml-2" aria-label="放映选项">
        <Caret />
      </button>
      <Divider className="ml-3 h-3.5" />
      <button className="ml-3" aria-label="适应窗口">
        <Icon size={16}>
          <path d="M1.500 5V2.500H5M11 2.500h3.500V5M14.500 11v2.500H11M5 13.500H1.500V11M5.500 5.500h5v5h-5z" />
        </Icon>
      </button>
      <button className="ml-[23px] flex items-center gap-3.5">
        99%
        <Caret />
      </button>
      <button className="ml-3.5" aria-label="缩小">
        <Icon size={16} width={2}>
          <path d="M3 8h10" />
        </Icon>
      </button>
      <input
        type="range"
        aria-label="缩放"
        value={zoom}
        onChange={(e) => setZoom(Number(e.target.value))}
        className="ml-3 h-0.5 w-[106px] appearance-none rounded bg-[linear-gradient(to_right,#1f62c8_50%,#b5b8bd_50%)] [&::-webkit-slider-thumb]:h-2.5 [&::-webkit-slider-thumb]:w-2.5 [&::-webkit-slider-thumb]:appearance-none [&::-webkit-slider-thumb]:rounded-full [&::-webkit-slider-thumb]:border-2 [&::-webkit-slider-thumb]:border-white [&::-webkit-slider-thumb]:bg-[#7f8389]"
      />
      <button className="ml-3" aria-label="放大">
        <Icon size={16} width={2}>
          <path d="M8 3.500v9M3.500 8h9" />
        </Icon>
      </button>
    </footer>
  );
}

function InputMethodBar() {
  return (
    <div className="absolute bottom-[81px] right-[3px] flex h-[25px] w-[61px] items-center justify-center gap-1 rounded-md border border-[#8c8d90] bg-white text-xs text-[#333] shadow-md">
      EN
      <Icon size={12} width={1}>
        <path d="M6.500 1.500c4 3 3 9-2 9-2 0-3-.5-3.500-1.500 3.500 0 6-3 5.500-7.500z" />
      </Icon>
      简
    </div>
  );
}

function SiteMark() {
  return (
    <div className="pointer-events-none absolute bottom-2 right-2 flex items-center opacity-90">
      <svg width="42" height="40" viewBox="0 0 44 42" aria-hidden="true">
        <defs>
          <linearGradient id="swirlBlue" x1="1" y1="0" x2="0" y2="1">
            <stop offset="0" stopColor="#63c4f0" />
            <stop offset="1" stopColor="#2a6fb8" />
          </linearGradient>
          <linearGradient id="swirlGreen" x1="1" y1="0" x2="0" y2="1">
            <stop offset="0" stopColor="#3cb069" />
            <stop offset="1" stopColor="#b5d24c" />
          </linearGradient>
        </defs>
        <path d="M44 1C22 0 3 10 0 26c0 4 2 7 5 8C1 22 20 5 44 1z" fill="url(#swirlBlue)" />
        <path d="M34 8C20 10 11 17 11 25c2 3 9 2 12-3-2 0-4 0-5-1 1-5 8-9 16-13z" fill="url(#swirlBlue)" />
        <path d="M27 15c10 0 16 5 14 12-3 9-17 14-33 12 11-1 20-4 22-12 1-5 0-9-3-12z" fill="url(#swirlGreen)" />
        <path d="M6 34c7 1 13-2 17-7-2 8-9 11-17 7z" fill="#2a6fb8" />
      </svg>
      <div className="text-center font-bold">
        <p className="text-[21px] leading-6 text-[#5795d2]">极光下载站</p>
        <p className="font-['Liberation_Sans',sans-serif] text-[17px] leading-[18px] text-[#4db87c]">www.xz7.com</p>
      </div>
    </div>
  );
}

function App() {
  const [activeTab, setActiveTab] = useState("图表工具");
  const [current, setCurrent] = useState(2);

  return (
    <div className="relative flex h-screen flex-col overflow-hidden bg-[radial-gradient(ellipse_at_0%_12%,#efe5e4_0%,#ececeb_24%,#ebedf2_55%,#eaecef_100%)] font-['Open_Sans','Noto_Sans_CJK_SC',sans-serif]">
      <TitleBar />
      <MenuBar active={activeTab} onSelect={setActiveTab} />
      <Ribbon />
      <div className="mt-px flex min-h-0 flex-1">
        <SlidePanel current={current} onSelect={setCurrent} />
        <Canvas />
        <PropertiesPanel />
        <IconRail />
      </div>
      <StatusBar />
      <InputMethodBar />
      <SiteMark />
    </div>
  );
}

export default App;
